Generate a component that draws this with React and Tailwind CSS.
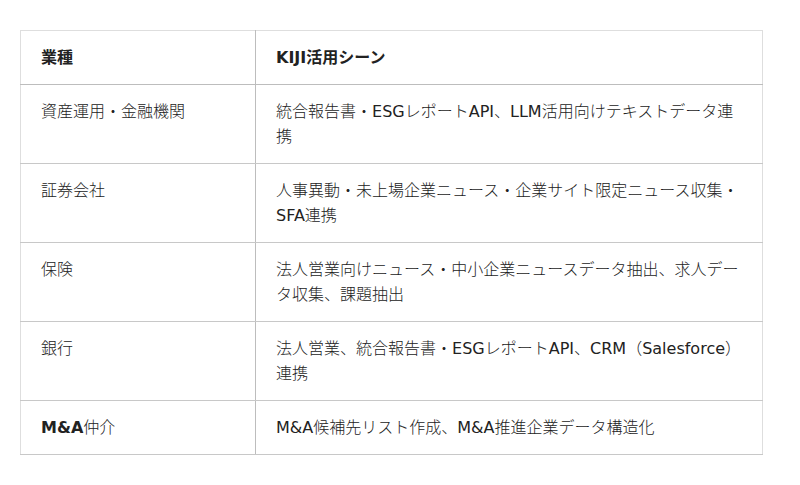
import React from 'react';

const rows = [
  { industry: '資産運用・金融機関', usage: '統合報告書・ESGレポートAPI、LLM活用向けテキストデータ連携' },
  { industry: '証券会社', usage: '人事異動・未上場企業ニュース・企業サイト限定ニュース収集・SFA連携' },
  { industry: '保険', usage: '法人営業向けニュース・中小企業ニュースデータ抽出、求人データ収集、課題抽出' },
  { industry: '銀行', usage: '法人営業、統合報告書・ESGレポートAPI、CRM（Salesforce）連携' },
  { industry: <><strong className="font-bold">M&amp;A</strong>仲介</>, usage: 'M&A候補先リスト作成、M&A推進企業データ構造化' },
];

// Latin runs keep the regular weight; Japanese text is drawn light
const mixed = (text) =>
  typeof text !== 'string'
    ? text
    : text.split(/([A-Za-z&]+)/).map((part, i) =>
        /^[A-Za-z&]+$/.test(part) ? <span key={i} className="font-normal">{part}</span> : part
      );

export default function App() {
  return (
    <div
      className="min-h-[485px] bg-white pt-[30px] pl-[20px] text-[#222] text-[16px] leading-[25px] font-light"
      style={{ fontFamily: '"DejaVu Sans", "Noto Sans CJK JP", sans-serif' }}
    >
      <table className="w-[742px] border-collapse table-fixed">
        <colgroup>
          <col className="w-[235px]" />
          <col className="w-[507px]" />
        </colgroup>
        <thead>
          <tr>
            <th className="border border-[#dedede] border-b-[#bdbdbd] border-r-[#bdbdbd] px-[20px] py-[14px] text-left align-top font-bold">業種</th>
            <th className="border border-[#dedede] border-b-[#bdbdbd] px-[20px] py-[14px] text-left align-top font-bold">KIJI活用シーン</th>
          </tr>
        </thead>
        <tbody>
          {rows.map((r, i) => (
            <tr key={i}>
              <td className="border border-[#dedede] border-b-[#c8c8c8] border-r-[#bdbdbd] px-[20px] py-[14px] align-top">{mixed(r.industry)}</td>
              <td className="border border-[#dedede] border-b-[#c8c8c8] px-[20px] py-[14px] align-top">{mixed(r.usage)}</td>
            </tr>
          ))}
        </tbody>
      </table>
    </div>
  );
}
